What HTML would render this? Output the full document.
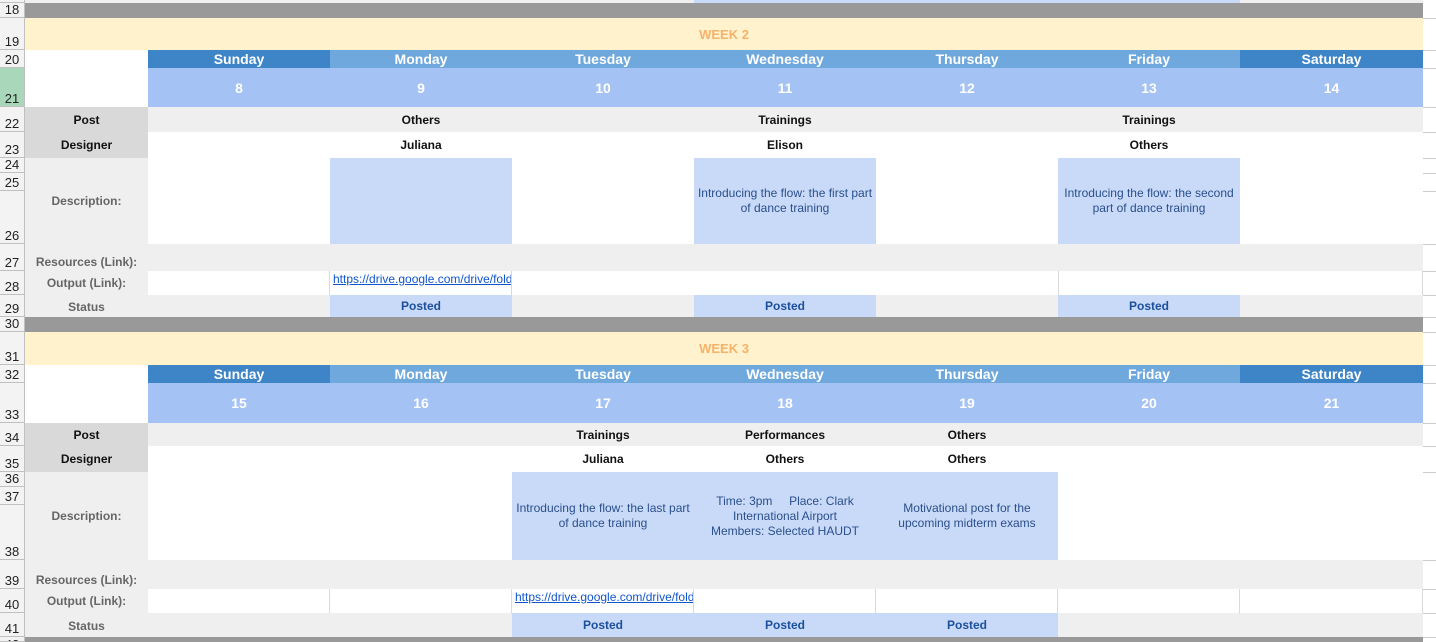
<!DOCTYPE html><html><head><style>
body{margin:0;width:1436px;height:642px;overflow:hidden;background:#fff;font-family:"Liberation Sans",Arial,sans-serif;position:relative}
div{position:absolute;box-sizing:border-box}
.c{display:flex;align-items:center;justify-content:center;text-align:center;white-space:nowrap}
.rh{left:0;width:25px;background:#f3f3f3;border-bottom:1px solid #c0c0c0;border-right:1px solid #c0c0c0;font-size:13px;color:#222;display:flex;align-items:flex-end;justify-content:center;padding-bottom:0;line-height:15px;overflow:hidden}
.dh{color:#fff;font-weight:bold;font-size:14px}
.pv{font-weight:bold;font-size:12px;color:#111}
.lb{font-weight:bold;font-size:12px;color:#666}
.ds{font-size:12px;color:#2a4f8c;white-space:normal;line-height:15px}
.ps{font-weight:bold;font-size:12px;color:#1c4f9c}
.lk{font-size:12px;color:#1155cc;text-decoration:underline;overflow:hidden;white-space:nowrap;padding-left:3px;line-height:14px}
.gl{border-right:1px solid #d9d9d9}
</style></head><body>
<div style="left:25px;top:0;width:1398px;height:3px;background:#efefef"></div>
<div style="left:694px;top:0;width:546px;height:3px;background:#c9daf8"></div>
<div style="left:25px;top:3px;width:1398px;height:15px;background:#999"></div>
<div class="c" style="left:25px;top:18px;width:1398px;height:32px;background:#fff2cc;color:#f6b26b;font-weight:bold;font-size:13px">WEEK 2</div>
<div class="c dh" style="left:148px;top:50px;width:182px;height:18px;background:#3d85c6">Sunday</div>
<div class="c dh" style="left:330px;top:50px;width:910px;height:18px;background:#6fa8dc"></div>
<div class="c dh" style="left:330px;top:50px;width:182px;height:18px">Monday</div>
<div class="c dh" style="left:512px;top:50px;width:182px;height:18px">Tuesday</div>
<div class="c dh" style="left:694px;top:50px;width:182px;height:18px">Wednesday</div>
<div class="c dh" style="left:876px;top:50px;width:182px;height:18px">Thursday</div>
<div class="c dh" style="left:1058px;top:50px;width:182px;height:18px">Friday</div>
<div class="c dh" style="left:1240px;top:50px;width:183px;height:18px;background:#3d85c6">Saturday</div>
<div style="left:148px;top:68px;width:1275px;height:39px;background:#a4c2f4"></div>
<div class="c dh" style="left:148px;top:68px;width:182px;height:39px">8</div>
<div class="c dh" style="left:330px;top:68px;width:182px;height:39px">9</div>
<div class="c dh" style="left:512px;top:68px;width:182px;height:39px">10</div>
<div class="c dh" style="left:694px;top:68px;width:182px;height:39px">11</div>
<div class="c dh" style="left:876px;top:68px;width:182px;height:39px">12</div>
<div class="c dh" style="left:1058px;top:68px;width:182px;height:39px">13</div>
<div class="c dh" style="left:1240px;top:68px;width:183px;height:39px">14</div>
<div style="left:148px;top:107px;width:1275px;height:25px;background:#efefef"></div>
<div class="c pv" style="left:25px;top:107px;width:123px;height:25px;background:#d9d9d9">Post</div>
<div class="c pv" style="left:25px;top:132px;width:123px;height:26px;background:#d9d9d9">Designer</div>
<div class="c pv" style="left:330px;top:107px;width:182px;height:25px">Others</div>
<div class="c pv" style="left:694px;top:107px;width:182px;height:25px">Trainings</div>
<div class="c pv" style="left:1058px;top:107px;width:182px;height:25px">Trainings</div>
<div class="c pv" style="left:330px;top:132px;width:182px;height:26px">Juliana</div>
<div class="c pv" style="left:694px;top:132px;width:182px;height:26px">Elison</div>
<div class="c pv" style="left:1058px;top:132px;width:182px;height:26px">Others</div>
<div class="c lb" style="left:25px;top:158px;width:123px;height:86px;background:#efefef">Description:</div>
<div style="left:330px;top:158px;width:182px;height:86px;background:#c9daf8"></div>
<div class="c ds" style="left:694px;top:158px;width:182px;height:86px;background:#c9daf8">Introducing the flow: the first part of dance training</div>
<div class="c ds" style="left:1058px;top:158px;width:182px;height:86px;background:#c9daf8">Introducing the flow: the second part of dance training</div>
<div style="left:25px;top:244px;width:1398px;height:27px;background:#efefef"></div>
<div class="lb" style="left:25px;top:244px;width:123px;height:27px;line-height:37px;text-align:center">Resources (Link):</div>
<div class="c lb" style="left:25px;top:271px;width:123px;height:24px;background:#efefef">Output (Link):</div>
<div class="gl" style="left:148px;top:271px;width:182px;height:24px"></div>
<div class="gl lk" style="left:330px;top:271px;width:182px;height:24px;padding-top:1px">https://drive.google.com/drive/folders</div>
<div class="gl" style="left:1058px;top:271px;width:1px;height:24px"></div>
<div class="gl" style="left:1240px;top:271px;width:183px;height:24px"></div>
<div style="left:25px;top:295px;width:1398px;height:22px;background:#efefef"></div>
<div class="c lb" style="left:25px;top:295px;width:123px;height:24px">Status</div>
<div class="c ps" style="left:330px;top:295px;width:182px;height:22px;background:#c9daf8">Posted</div>
<div class="c ps" style="left:694px;top:295px;width:182px;height:22px;background:#c9daf8">Posted</div>
<div class="c ps" style="left:1058px;top:295px;width:182px;height:22px;background:#c9daf8">Posted</div>
<div style="left:25px;top:317px;width:1398px;height:15px;background:#999"></div>
<div class="c" style="left:25px;top:332px;width:1398px;height:33px;background:#fff2cc;color:#f6b26b;font-weight:bold;font-size:13px">WEEK 3</div>
<div class="c dh" style="left:148px;top:365px;width:182px;height:18px;background:#3d85c6">Sunday</div>
<div style="left:330px;top:365px;width:910px;height:18px;background:#6fa8dc"></div>
<div class="c dh" style="left:330px;top:365px;width:182px;height:18px">Monday</div>
<div class="c dh" style="left:512px;top:365px;width:182px;height:18px">Tuesday</div>
<div class="c dh" style="left:694px;top:365px;width:182px;height:18px">Wednesday</div>
<div class="c dh" style="left:876px;top:365px;width:182px;height:18px">Thursday</div>
<div class="c dh" style="left:1058px;top:365px;width:182px;height:18px">Friday</div>
<div class="c dh" style="left:1240px;top:365px;width:183px;height:18px;background:#3d85c6">Saturday</div>
<div style="left:148px;top:383px;width:1275px;height:40px;background:#a4c2f4"></div>
<div class="c dh" style="left:148px;top:383px;width:182px;height:40px">15</div>
<div class="c dh" style="left:330px;top:383px;width:182px;height:40px">16</div>
<div class="c dh" style="left:512px;top:383px;width:182px;height:40px">17</div>
<div class="c dh" style="left:694px;top:383px;width:182px;height:40px">18</div>
<div class="c dh" style="left:876px;top:383px;width:182px;height:40px">19</div>
<div class="c dh" style="left:1058px;top:383px;width:182px;height:40px">20</div>
<div class="c dh" style="left:1240px;top:383px;width:183px;height:40px">21</div>
<div style="left:148px;top:423px;width:1275px;height:23px;background:#efefef"></div>
<div class="c pv" style="left:25px;top:423px;width:123px;height:23px;background:#d9d9d9">Post</div>
<div class="c pv" style="left:25px;top:446px;width:123px;height:26px;background:#d9d9d9">Designer</div>
<div class="c pv" style="left:512px;top:423px;width:182px;height:23px">Trainings</div>
<div class="c pv" style="left:694px;top:423px;width:182px;height:23px">Performances</div>
<div class="c pv" style="left:876px;top:423px;width:182px;height:23px">Others</div>
<div class="c pv" style="left:512px;top:446px;width:182px;height:26px">Juliana</div>
<div class="c pv" style="left:694px;top:446px;width:182px;height:26px">Others</div>
<div class="c pv" style="left:876px;top:446px;width:182px;height:26px">Others</div>
<div class="c lb" style="left:25px;top:472px;width:123px;height:88px;background:#efefef">Description:</div>
<div style="left:512px;top:472px;width:546px;height:88px;background:#c9daf8"></div>
<div class="c ds" style="left:512px;top:472px;width:182px;height:88px">Introducing the flow: the last part of dance training</div>
<div class="c ds" style="left:694px;top:472px;width:182px;height:88px">Time: 3pm&nbsp;&nbsp;&nbsp;&nbsp;&nbsp;Place: Clark<br>International Airport<br>Members: Selected HAUDT</div>
<div class="c ds" style="left:876px;top:472px;width:182px;height:88px;padding:0 12px">Motivational post for the upcoming midterm exams</div>
<div style="left:25px;top:560px;width:1398px;height:29px;background:#efefef"></div>
<div class="lb" style="left:25px;top:560px;width:123px;height:29px;line-height:40px;text-align:center">Resources (Link):</div>
<div class="c lb" style="left:25px;top:589px;width:123px;height:24px;background:#efefef">Output (Link):</div>
<div class="gl" style="left:148px;top:589px;width:182px;height:24px"></div>
<div class="gl" style="left:330px;top:589px;width:182px;height:24px"></div>
<div class="gl lk" style="left:512px;top:589px;width:182px;height:24px;padding-top:1px">https://drive.google.com/drive/folders</div>
<div class="gl" style="left:694px;top:589px;width:182px;height:24px"></div>
<div class="gl" style="left:876px;top:589px;width:182px;height:24px"></div>
<div class="gl" style="left:1058px;top:589px;width:182px;height:24px"></div>
<div class="gl" style="left:1240px;top:589px;width:183px;height:24px"></div>
<div style="left:25px;top:613px;width:1398px;height:24px;background:#efefef"></div>
<div class="c lb" style="left:25px;top:613px;width:123px;height:26px">Status</div>
<div style="left:512px;top:613px;width:546px;height:24px;background:#c9daf8"></div>
<div class="c ps" style="left:512px;top:613px;width:182px;height:24px">Posted</div>
<div class="c ps" style="left:694px;top:613px;width:182px;height:24px">Posted</div>
<div class="c ps" style="left:876px;top:613px;width:182px;height:24px">Posted</div>
<div style="left:25px;top:637px;width:1398px;height:5px;background:#999"></div>
<div style="left:1423px;top:18px;width:13px;height:1px;background:#ccc"></div>
<div style="left:1423px;top:50px;width:13px;height:1px;background:#ccc"></div>
<div style="left:1423px;top:68px;width:13px;height:1px;background:#ccc"></div>
<div style="left:1423px;top:107px;width:13px;height:1px;background:#ccc"></div>
<div style="left:1423px;top:132px;width:13px;height:1px;background:#ccc"></div>
<div style="left:1423px;top:158px;width:13px;height:1px;background:#ccc"></div>
<div style="left:1423px;top:173px;width:13px;height:1px;background:#ccc"></div>
<div style="left:1423px;top:191px;width:13px;height:1px;background:#ccc"></div>
<div style="left:1423px;top:244px;width:13px;height:1px;background:#ccc"></div>
<div style="left:1423px;top:271px;width:13px;height:1px;background:#ccc"></div>
<div style="left:1423px;top:295px;width:13px;height:1px;background:#ccc"></div>
<div style="left:1423px;top:317px;width:13px;height:1px;background:#ccc"></div>
<div style="left:1423px;top:332px;width:13px;height:1px;background:#ccc"></div>
<div style="left:1423px;top:365px;width:13px;height:1px;background:#ccc"></div>
<div style="left:1423px;top:383px;width:13px;height:1px;background:#ccc"></div>
<div style="left:1423px;top:423px;width:13px;height:1px;background:#ccc"></div>
<div style="left:1423px;top:446px;width:13px;height:1px;background:#ccc"></div>
<div style="left:1423px;top:472px;width:13px;height:1px;background:#ccc"></div>
<div style="left:1423px;top:560px;width:13px;height:1px;background:#ccc"></div>
<div style="left:1423px;top:589px;width:13px;height:1px;background:#ccc"></div>
<div style="left:1423px;top:613px;width:13px;height:1px;background:#ccc"></div>
<div style="left:1423px;top:637px;width:13px;height:1px;background:#ccc"></div>
<div class="rh" style="top:0;height:3px"></div>
<div class="rh" style="top:3px;height:15px">18</div>
<div class="rh" style="top:18px;height:32px">19</div>
<div class="rh" style="top:50px;height:18px">20</div>
<div class="rh" style="top:68px;height:39px;background:#a8d8b9">21</div>
<div class="rh" style="top:107px;height:25px">22</div>
<div class="rh" style="top:132px;height:26px">23</div>
<div class="rh" style="top:158px;height:15px">24</div>
<div class="rh" style="top:173px;height:18px">25</div>
<div class="rh" style="top:191px;height:53px">26</div>
<div class="rh" style="top:244px;height:27px">27</div>
<div class="rh" style="top:271px;height:24px">28</div>
<div class="rh" style="top:295px;height:22px">29</div>
<div class="rh" style="top:317px;height:15px">30</div>
<div class="rh" style="top:332px;height:33px">31</div>
<div class="rh" style="top:365px;height:18px">32</div>
<div class="rh" style="top:383px;height:40px">33</div>
<div class="rh" style="top:423px;height:23px">34</div>
<div class="rh" style="top:446px;height:26px">35</div>
<div class="rh" style="top:472px;height:15px">36</div>
<div class="rh" style="top:487px;height:18px">37</div>
<div class="rh" style="top:505px;height:55px">38</div>
<div class="rh" style="top:560px;height:29px">39</div>
<div class="rh" style="top:589px;height:24px">40</div>
<div class="rh" style="top:613px;height:24px">41</div>
<div class="rh" style="top:637px;height:5px;align-items:flex-start">42</div>
</body></html>
